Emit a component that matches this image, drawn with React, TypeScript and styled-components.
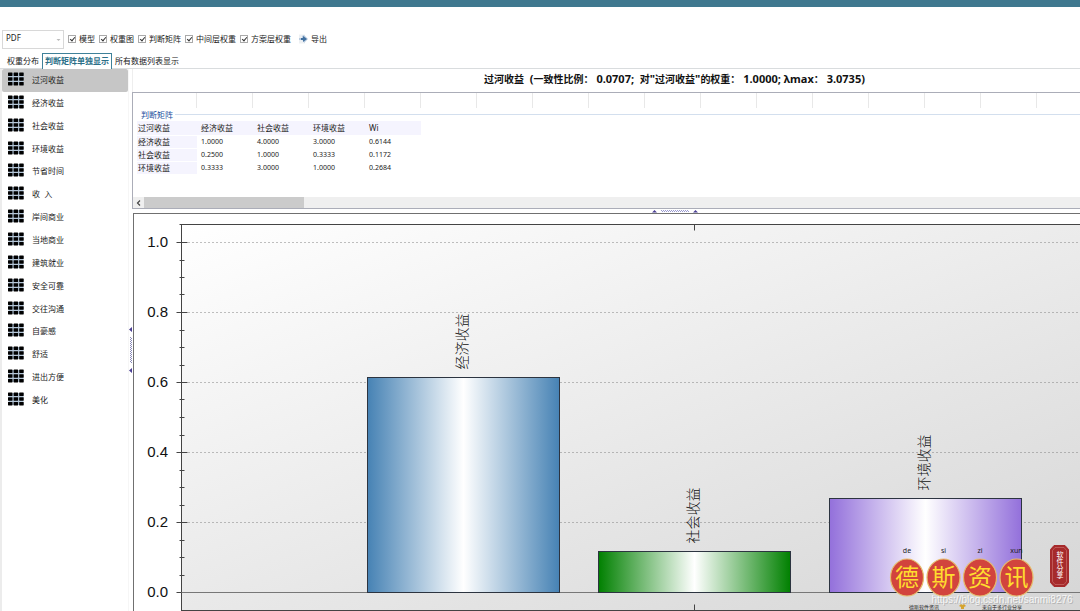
import React, { useState } from "react";
import styled, { createGlobalStyle } from "styled-components";

const sans = `"Noto Sans", "Noto Sans CJK SC", sans-serif`;

const GlobalStyle = createGlobalStyle`
  *, *::before, *::after { box-sizing: border-box; }
  body {
    margin: 0;
    background: #fff;
    color: #222;
    font-family: ${sans};
    font-size: 8px;
    line-height: 12px;
    overflow-x: hidden;
  }
  button, select, input { font: inherit; color: inherit; margin: 0; }
`;

const Page = styled.div`
  position: relative;
  display: flex;
  flex-direction: column;
  overflow: hidden;
`;

const TitleBar = styled.header`
  height: 7px;
  background: #3f788f;
`;

const Toolbar = styled.div`
  display: flex;
  align-items: center;
  gap: 4px;
  padding: 23px 2px 0;
`;

const FormatBox = styled.div`
  position: relative;
  width: 62px;
`;

const FormatSelect = styled.select`
  display: block;
  appearance: none;
  width: 100%;
  height: 19px;
  padding: 0 10px 4px 3px;
  border: 1px solid #d8d8d8;
  border-radius: 0;
  background: #fff;
`;

const SelectArrow = styled.svg`
  position: absolute;
  right: 3px;
  top: 8px;
  pointer-events: none;
`;

const CheckLabel = styled.label`
  display: flex;
  align-items: center;
  gap: 3px;
  padding-bottom: 2px;
  white-space: nowrap;
`;

const CheckBox = styled.input`
  appearance: none;
  display: grid;
  place-items: center;
  width: 8px;
  height: 8px;
  border: 1px solid #aaa;
  background: #fff;
  &:checked::after {
    content: "";
    width: 3px;
    height: 5px;
    border: solid #333;
    border-width: 0 1px 1px 0;
    transform: rotate(40deg);
  }
`;

const ExportButton = styled.button`
  display: flex;
  align-items: center;
  gap: 3px;
  padding: 0 0 2px;
  margin-left: 3px;
  border: 0;
  background: none;
`;

const TabRow = styled.div`
  display: flex;
  height: 20px;
  padding: 4px 0 0 4px;
  border-bottom: 1px solid #d9dcde;
`;

const Tab = styled.button<{ $active: boolean }>`
  padding: 0 2px 2px;
  height: 16px;
  border: 1px solid ${(p) => (p.$active ? "#3f8199" : "transparent")};
  border-bottom: 0;
  background: ${(p) => (p.$active ? "#fff" : "none")};
  color: ${(p) => (p.$active ? "#2b6f88" : "#222")};
  font-weight: ${(p) => (p.$active ? 700 : 400)};
  white-space: nowrap;
`;

const Workspace = styled.div`
  display: grid;
  grid-template-columns: 128px 4px minmax(0, 1fr);
`;

const Sidebar = styled.nav`
  border-left: 2px solid #ececec;
`;

const SideList = styled.div`
  display: grid;
  grid-auto-rows: 1fr;
  height: 343px;
`;

const SideItem = styled.button<{ $active: boolean }>`
  display: flex;
  align-items: center;
  gap: 8px;
  width: 100%;
  padding: 0 6px 1px;
  border: 0;
  border-radius: 2px;
  background: ${(p) => (p.$active ? "#c6c6c6" : "none")};
  text-align: left;
  white-space: pre;
`;

const SideIcon = styled.svg`
  margin-bottom: 2px;
`;

const SideSplitter = styled.div`
  border-left: 1px solid #f6f6f6;
  padding-top: 257px;
`;

const Main = styled.main`
  display: flex;
  flex-direction: column;
`;

const MatrixTitle = styled.h1`
  margin: 0;
  height: 23px;
  padding-left: 136px;
  border-left: 1px solid #eee;
  color: #111;
  font-size: 11px;
  font-weight: 700;
  line-height: 19px;
  text-align: center;
  white-space: pre;
`;

const Han = styled.span`
  font-size: 10px;
`;

const MatrixPanel = styled.section`
  border: 1px solid #abadb8;
  border-right: 0;
`;

const ColumnRuler = styled.div`
  height: 15px;
  margin-left: 63px;
  background: repeating-linear-gradient(to right, #e8e8e8 0 1px, transparent 1px 56px);
`;

const GroupHeader = styled.h2`
  display: flex;
  align-items: center;
  gap: 2px;
  margin: 0;
  padding-left: 8px;
  color: #2450a0;
  font-size: 8px;
  font-weight: 400;
  line-height: 13px;
  &::after {
    content: "";
    flex: 1;
    height: 1px;
    background: #d3dfee;
  }
`;

const MatrixTable = styled.table`
  width: 284px;
  margin: 0 0 23px 4px;
  border-collapse: collapse;
  table-layout: fixed;
`;

const HeadCell = styled.th<{ $first?: boolean }>`
  width: ${(p) => (p.$first ? 60 : 56)}px;
  height: 14px;
  padding: 0 0 0 ${(p) => (p.$first ? 1 : 4)}px;
  background: #f5f4fe;
  font-weight: 400;
  text-align: left;
  line-height: 12px;
`;

const RowHead = styled.th`
  height: 13px;
  padding: 0 0 0 1px;
  border-top: 1px solid #fff;
  background: #f5f4fe;
  font-weight: 400;
  text-align: left;
`;

const ValueCell = styled.td`
  height: 13px;
  padding: 0 0 0 4px;
  font-size: 7px;
`;

const ScrollTrack = styled.div`
  display: flex;
  height: 11px;
  background: #efefef;
`;

const ScrollArrow = styled.button`
  display: grid;
  place-items: center;
  width: 11px;
  padding: 0;
  border: 0;
  background: none;
`;

const ScrollThumb = styled.div`
  width: 160px;
  background: #cbcbcb;
`;

const MainSplitter = styled.div`
  display: flex;
  justify-content: center;
  height: 4px;
  padding-left: 138px;
`;

const ChartPanel = styled.section`
  position: relative;
  margin-left: 1px;
  border: solid #707070;
  border-width: 1px 0 0 1px;
`;

const ChartSvg = styled.svg`
  display: block;
  width: 100%;
  height: 397px;
`;

const Brand = styled.svg`
  position: absolute;
  right: 0;
  bottom: 0;
`;

const Watermark = styled.svg`
  position: absolute;
  inset: 0;
  width: 100%;
  height: 100%;
  pointer-events: none;
`;

const checks = ["模型", "权重图", "判断矩阵", "中间层权重", "方案层权重"];
const tabs = ["权重分布", "判断矩阵单独显示", "所有数据列表显示"];
const items = [
  "过河收益", "经济收益", "社会收益", "环境收益", "节省时间", "收  入", "岸间商业", "当地商业",
  "建筑就业", "安全可靠", "交往沟通", "自豪感", "舒适", "进出方便", "美化",
];
const columns = ["过河收益", "经济收益", "社会收益", "环境收益", "Wi"];
const rows = [
  ["经济收益", "1.0000", "4.0000", "3.0000", "0.6144"],
  ["社会收益", "0.2500", "1.0000", "0.3333", "0.1172"],
  ["环境收益", "0.3333", "3.0000", "1.0000", "0.2684"],
];

const bars = [
  { name: "经济收益", value: 0.6144, color: "#4682b4" },
  { name: "社会收益", value: 0.1172, color: "#008000" },
  { name: "环境收益", value: 0.2684, color: "#9370db" },
];

const GridIcon = () => (
  <SideIcon width="16" height="14" viewBox="0 0 16 14" aria-hidden="true">
    <rect x="0.5" y="1" width="15" height="12" fill="#b4c6d8" />
    {[0, 1, 2].map((r) =>
      [0, 1, 2].map((c) => (
        <rect key={`${r}${c}`} x={c * 5.6} y={0.5 + r * 4.7} width="4.5" height="3.5" rx="0.4" fill="#000" />
      ))
    )}
  </SideIcon>
);

const plot = { left: 47.5, top: 10.5, width: 1027, height: 386, zero: 378.5, unit: 350 };
const yOf = (v: number) => Math.round(plot.zero - v * plot.unit - 0.5) + 0.5;

function WeightChart() {
  const minor = Array.from({ length: 21 }, (_, i) => i * 0.05);
  const major = [0, 0.2, 0.4, 0.6, 0.8, 1];
  return (
    <ChartSvg role="img" aria-label="权重柱状图">
      <defs>
        <linearGradient id="plotFill" x1="0" y1="0" x2="1" y2="1">
          <stop offset="0" stopColor="#fff" />
          <stop offset="1" stopColor="#d3d3d3" />
        </linearGradient>
        {bars.map((b, i) => (
          <linearGradient key={b.name} id={`bar${i}`}>
            <stop offset="0" stopColor={b.color} />
            <stop offset="0.5" stopColor="#fff" />
            <stop offset="1" stopColor={b.color} />
          </linearGradient>
        ))}
      </defs>
      <rect x={plot.left} y={plot.top} width={plot.width} height={plot.height} fill="url(#plotFill)" stroke="#444" />
      {major.slice(1).map((v) => (
        <line key={v} x1={plot.left + 7} x2={plot.left + plot.width} y1={yOf(v)} y2={yOf(v)} stroke="#808080" strokeDasharray="1 3" />
      ))}
      {minor.map((v, i) => (
        <line key={i} x1={plot.left - 2} x2={plot.left + 3} y1={yOf(v)} y2={yOf(v)} stroke="#444" />
      ))}
      <line x1={plot.left - 2} x2={plot.left} y1={plot.top} y2={plot.top} stroke="#444" />
      {major.map((v) => (
        <g key={v}>
          <line x1={plot.left - 5} x2={plot.left + 6} y1={yOf(v)} y2={yOf(v)} stroke="#444" />
          <text x="34" y={yOf(v) + 4} textAnchor="end" fontFamily="Liberation Sans, sans-serif" fontSize="15" fill="#111">
            {v.toFixed(1)}
          </text>
        </g>
      ))}
      <line x1={plot.left} x2={plot.left + plot.width} y1={plot.zero} y2={plot.zero} stroke="#777" />
      <line x1="560.5" x2="560.5" y1={plot.top} y2={plot.top + 6} stroke="#444" />
      <line x1="560.5" x2="560.5" y1={plot.top + plot.height - 6} y2={plot.top + plot.height} stroke="#444" />
      {bars.map((b, i) => {
        const x = 233.5 + i * 231;
        const y = yOf(b.value);
        return (
          <g key={b.name}>
            <rect x={x} y={y} width="192" height={plot.zero - y} fill={`url(#bar${i})`} stroke="#2c3440" />
            <text
              transform={`translate(${x + 99} ${y - 8}) rotate(-90)`}
              fontFamily="Noto Sans CJK SC, sans-serif"
              fontSize="14"
              fontWeight="300"
              fill="#111"
            >
              {b.name}
            </text>
          </g>
        );
      })}
    </ChartSvg>
  );
}

const seals = [
  { char: "德", pinyin: "de" },
  { char: "斯", pinyin: "si" },
  { char: "资", pinyin: "zi" },
  { char: "讯", pinyin: "xun" },
];

function BrandMark() {
  return (
    <Brand width="192" height="69" viewBox="0 0 192 69" fontFamily="Noto Sans, Noto Sans CJK SC, sans-serif" textAnchor="middle">
      {seals.map((s, i) => {
        const cx = 19 + i * 36.5;
        return (
          <g key={s.char}>
            <text x={cx} y="11" fontSize="7" fill="#222">{s.pinyin}</text>
            <ellipse cx={cx} cy="35.5" rx="16.5" ry="18.5" fill="#d2443d" stroke="#e5bd6c" strokeWidth="1.2" />
            <text x={cx} y="44" fontSize="24" fill="#ffdc2e">{s.char}</text>
          </g>
        );
      })}
      <path d="M166 3.500h11l3.500 4v33l-3.500 4h-11l-3.500-4v-33z" fill="#a62a2b" stroke="#a62a2b" />
      <path d="M167 5.500h9l2.500 3v31l-2.500 3h-9l-2.500-3v-31z" fill="none" stroke="#cf7774" strokeWidth="0.6" />
      {["软", "件", "分", "享"].map((c, i) => (
        <text key={c} x="172" y={15 + i * 7} fontSize="7" fill="#fff">{c}</text>
      ))}
      <text x="36" y="67" fontSize="5" fill="#222">德斯软件资讯</text>
      <path d="M71 64l2-2 1.500 1 1.500-1 2 2-2 1 0 2h-3v-2z" fill="#d5a430" />
      <text x="114" y="67" fontSize="5" fill="#222">来自于多行业分享</text>
      <text x="115" y="62" fontFamily="Liberation Sans, sans-serif" fontSize="10" fill="#999" fillOpacity="0.6">
        https://blog.csdn.net/sanmi8276
      </text>
      <text x="114" y="61" fontFamily="Liberation Sans, sans-serif" fontSize="10" fill="#fff" fillOpacity="0.8" aria-hidden="true">
        https://blog.csdn.net/sanmi8276
      </text>
    </Brand>
  );
}

export default function App() {
  const [tab, setTab] = useState(1);
  const [item, setItem] = useState(0);
  return (
    <Page>
      <GlobalStyle />
      <TitleBar />
      <Toolbar>
        <FormatBox>
          <FormatSelect aria-label="导出格式" defaultValue="PDF">
            <option>PDF</option>
          </FormatSelect>
          <SelectArrow width="5" height="4" viewBox="0 0 5 4" aria-hidden="true">
            <path d="M0.500 1h4L2.500 3z" fill="#bbb" />
          </SelectArrow>
        </FormatBox>
        {checks.map((c) => (
          <CheckLabel key={c}>
            <CheckBox type="checkbox" defaultChecked />
            {c}
          </CheckLabel>
        ))}
        <ExportButton type="button">
          <svg width="10" height="10" viewBox="0 0 10 10" aria-hidden="true">
            <path d="M1 0.500h6v9h-6z" fill="#edf0f3" />
            <path d="M1 4h3V2l2-1 4 4-4 4V7l-2-1H1z" fill="#b9cbe0" />
            <path d="M3 4h2V2l4 3-4 3V6H3z" fill="#41709f" />
          </svg>
          导出
        </ExportButton>
      </Toolbar>
      <TabRow role="tablist">
        {tabs.map((t, i) => (
          <Tab key={t} type="button" role="tab" aria-selected={i === tab} $active={i === tab} onClick={() => setTab(i)}>
            {t}
          </Tab>
        ))}
      </TabRow>
      <Workspace>
        <Sidebar>
          <SideList>
            {items.map((name, i) => (
              <SideItem key={name} type="button" $active={i === item} onClick={() => setItem(i)}>
                <GridIcon />
                {name}
              </SideItem>
            ))}
          </SideList>
        </Sidebar>
        <SideSplitter>
          <svg width="3" height="48" viewBox="0 0 3 48" aria-hidden="true">
            <path d="M3 1v5L0 3.500zM3 42v5L0 44.500z" fill="#4b3f94" />
            <path d="M1.500 11v26M2.500 12v26" stroke="#8a8ab8" strokeDasharray="1 1" />
          </svg>
        </SideSplitter>
        <Main>
          <MatrixTitle>
            <Han>过河收益</Han>{"  ("}<Han>一致性比例：</Han>{" 0.0707;  "}<Han>对</Han>"<Han>过河收益</Han>"<Han>的权重：</Han>
            {" 1.0000; λmax"}<Han>：</Han>{" 3.0735)"}
          </MatrixTitle>
          <MatrixPanel>
            <ColumnRuler />
            <GroupHeader>判断矩阵</GroupHeader>
            <MatrixTable>
              <thead>
                <tr>
                  {columns.map((c, i) => (
                    <HeadCell key={c} scope="col" $first={i === 0}>{c}</HeadCell>
                  ))}
                </tr>
              </thead>
              <tbody>
                {rows.map(([name, ...values]) => (
                  <tr key={name}>
                    <RowHead scope="row">{name}</RowHead>
                    {values.map((v, i) => (
                      <ValueCell key={i}>{v}</ValueCell>
                    ))}
                  </tr>
                ))}
              </tbody>
            </MatrixTable>
            <ScrollTrack>
              <ScrollArrow type="button" aria-label="向左滚动">
                <svg width="5" height="6" viewBox="0 0 5 6" aria-hidden="true">
                  <path d="M4 0.500L1.500 3 4 5.500" fill="none" stroke="#444" strokeWidth="1.2" />
                </svg>
              </ScrollArrow>
              <ScrollThumb />
            </ScrollTrack>
          </MatrixPanel>
          <MainSplitter>
            <svg width="46" height="4" viewBox="0 0 46 4" aria-hidden="true">
              <path d="M0 3.500h5L2.500 1zM41 3.500h5L43.500 1z" fill="#4b3f94" />
              <path d="M9 1.500h28M10 2.500h28" stroke="#9a9ad0" strokeDasharray="1 1" />
            </svg>
          </MainSplitter>
          <ChartPanel>
            <WeightChart />
            <BrandMark />
          </ChartPanel>
        </Main>
      </Workspace>
      <Watermark aria-hidden="true" fontFamily="Liberation Serif, serif" fontSize="22" fill="#000" fillOpacity="0.02">
        {[-20, 465, 950].map((x) => (
          <text key={x} transform={`translate(${x} 495) rotate(-45)`}>
            {Array(8).fill("112772").join("\u00a0\u00a0\u00a0")}
          </text>
        ))}
      </Watermark>
    </Page>
  );
}
